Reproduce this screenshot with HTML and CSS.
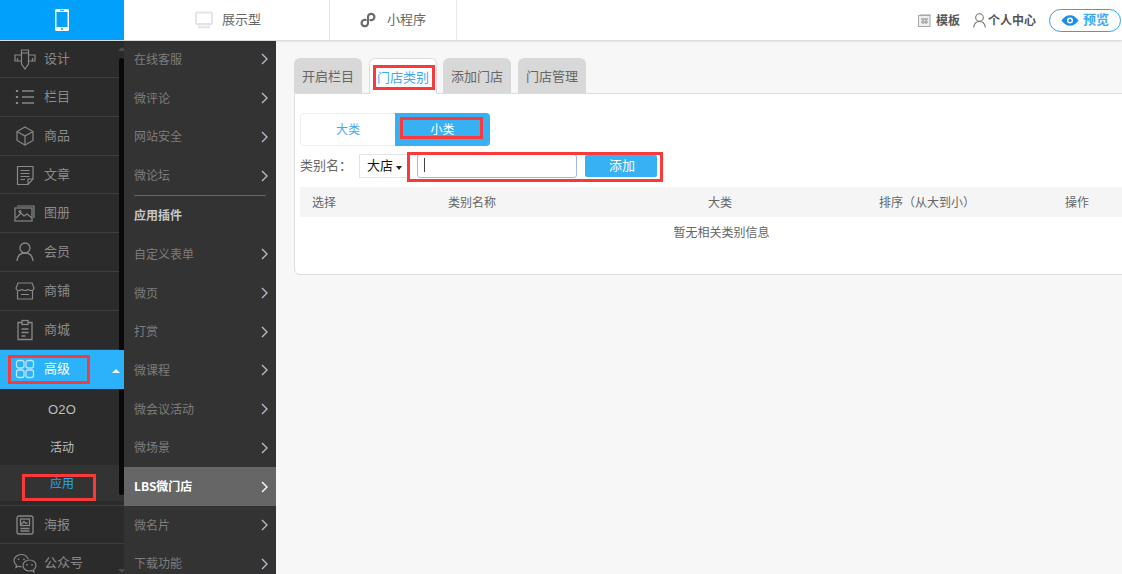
FILE: index.html
```html
<!DOCTYPE html>
<html lang="zh-CN">
<head>
<meta charset="utf-8">
<title>门店类别</title>
<link rel="stylesheet" href="styles.css">
</head>
<body>
<header class="topbar">
  <div class="logo">
    <svg width="14" height="22" viewBox="0 0 14 22"><rect width="14" height="22" rx="1.5" fill="#fff"/><rect x="1.5" y="3" width="11" height="15" fill="#00a0fb"/><rect x="5" y="0.9" width="4" height="0.9" fill="#00a0fb"/><circle cx="7" cy="20" r="1" fill="#00a0fb"/></svg>
  </div>
  <nav class="modes">
    <div class="mode mode-show">
      <svg width="18" height="18" viewBox="0 0 18 18" fill="none" stroke="#e4e4e4" stroke-width="2"><rect x="1" y="1.500" width="16" height="11.500" rx="1"/><path d="M4 14.500v2h10v-2" fill="#ececec" stroke-width="1.500"/></svg>
      <span>展示型</span>
    </div>
    <div class="mode mode-mini">
      <svg width="16" height="16" viewBox="0 0 16 16" fill="none" stroke="#6b6b6b" stroke-width="2.200" stroke-linecap="round"><path d="M5.500 7.900A3.200 3.200 0 1 0 8 11V5a3.200 3.200 0 1 1 2.500 3.100"/></svg>
      <span>小程序</span>
    </div>
  </nav>
  <div class="tools">
    <div class="tool tool-tpl">
      <svg width="13" height="13" viewBox="0 0 13 13" fill="none" stroke="#a8a8a8"><rect x="0.500" y="1.500" width="11.500" height="11" fill="#efefef"/><path d="M2 .5h10.500v10" stroke="#ccc"/><path d="M3 5h7M3 8h7M5 5v5M8 5v5" stroke-width="1.500"/></svg>
      <span>模板</span>
    </div>
    <div class="tool tool-user">
      <svg width="13" height="15" viewBox="0 0 13 15" fill="none" stroke="#777" stroke-width="1.100"><circle cx="6.500" cy="4.500" r="3.800"/><path d="M.7 14.500c.4-3.800 2.500-6 5.800-6s5.400 2.200 5.800 6"/></svg>
      <span>个人中心</span>
    </div>
    <div class="preview">
      <svg width="18" height="11" viewBox="0 0 17 11"><path d="M0 5.500C2.500 2 5.300.3 8.500.3S14.500 2 17 5.500c-2.500 3.500-5.300 5.200-8.500 5.200S2.500 9 0 5.500z" fill="#1a8fe8"/><circle cx="8.500" cy="5.500" r="3" fill="#fff"/><circle cx="8.500" cy="5.500" r="1.600" fill="#1a8fe8"/></svg>
      <span>预览</span>
    </div>
  </div>
</header>

<div class="body">
  <aside class="side">
    <ul class="menu">
      <li class="item"><svg class="ico" width="22" height="22" viewBox="0 0 22 22" fill="none" stroke="#888" stroke-width="1.200"><path d="M1 7h20v6H1z"/><path d="M7.500 2h7v14l-3.500 5-3.500-5z" fill="#2b2b2b"/><path d="M7.500 5h7M3.500 10v3M18.500 10v3"/></svg><span>设计</span></li>
      <li class="item"><svg class="ico" width="22" height="22" viewBox="0 0 22 22" fill="none" stroke="#888" stroke-width="1.400"><path d="M8 5h12M8 11h12M8 17h12"/><path d="M3 4v2M3 10v2M3 16v2" stroke-width="2.200"/></svg><span>栏目</span></li>
      <li class="item"><svg class="ico" width="22" height="22" viewBox="0 0 22 22" fill="none" stroke="#888" stroke-width="1.200"><path d="M11 2l8 4.500v9L11 20l-8-4.500v-9z"/><path d="M3 6.500l8 4.500 8-4.500M11 11v9"/></svg><span>商品</span></li>
      <li class="item"><svg class="ico" width="22" height="22" viewBox="0 0 22 22" fill="none" stroke="#888" stroke-width="1.200"><path d="M19 15V2.500H3.500v18H14z"/><path d="M19 15h-5v5.500M6.500 6.500h9M6.500 9.500h9M6.500 12.500h9M6.500 15.500h4.500"/></svg><span>文章</span></li>
      <li class="item"><svg class="ico" width="22" height="22" viewBox="0 0 22 22" fill="none" stroke="#888" stroke-width="1.200"><path d="M3 4h17v12"/><rect x="1" y="6" width="17" height="13"/><path d="M2 16l5-5 3 3 3-2 5 4"/><circle cx="6" cy="9.500" r="1"/></svg><span>图册</span></li>
      <li class="item"><svg class="ico" width="22" height="22" viewBox="0 0 22 22" fill="none" stroke="#888" stroke-width="1.300"><circle cx="11" cy="7" r="5"/><path d="M3 20c.5-5 3.500-8 8-8s7.500 3 8 8"/></svg><span>会员</span></li>
      <li class="item"><svg class="ico" width="22" height="22" viewBox="0 0 22 22" fill="none" stroke="#888" stroke-width="1.200"><path d="M4 3h14l2 5c0 1.500-1.500 2.500-3 2.500S14 9.500 14 9c0 .5-1.500 1.500-3 1.500S8 9.500 8 9c0 .5-1.500 1.500-3 1.500S2 9.500 2 8z"/><path d="M3.500 10.500V19h15v-8.500M7 14.500h8"/></svg><span>商铺</span></li>
      <li class="item"><svg class="ico" width="22" height="22" viewBox="0 0 22 22" fill="none" stroke="#888" stroke-width="1.300"><path d="M8 3.500H4v17h14v-17h-4"/><rect x="8" y="1.500" width="6" height="4"/><path d="M7.500 10h7M7.500 13.500h7M7.500 17h4"/></svg><span>商城</span></li>
      <li class="item item-active">
        <svg class="ico" width="22" height="22" viewBox="0 0 22 22" fill="none" stroke="#bfe6ff" stroke-width="1.300"><rect x="2.500" y="2.500" width="7.500" height="7.500" rx="2"/><rect x="12" y="2.500" width="7.500" height="7.500" rx="2"/><rect x="2.500" y="12" width="7.500" height="7.500" rx="2"/><rect x="12" y="12" width="7.500" height="7.500" rx="2"/></svg>
        <span>高级</span><i class="caret"></i><b class="mark mark-adv"></b>
      </li>
      <li class="sub">
        <div class="sub-item sub-o2o">O2O</div>
        <div class="sub-item">活动</div>
        <div class="sub-item sub-on"><span>应用</span><b class="mark mark-app"></b></div>
      </li>
      <li class="item"><svg class="ico" width="22" height="22" viewBox="0 0 22 22" fill="none" stroke="#888" stroke-width="1.300"><rect x="3" y="2" width="16" height="18" rx="2"/><rect x="6.500" y="5" width="9" height="6.500"/><path d="M6.500 14.500h9M6.500 17h9M7 10.500l3-3 2 2 1.500-1"/></svg><span>海报</span></li>
      <li class="item"><svg class="ico ico-wx" width="24" height="22" viewBox="0 0 24 22" fill="none" stroke="#888" stroke-width="1.200"><path d="M15 7C14 4 11.500 2.500 8.500 2.500 4.500 2.500 1 5 1 8.500c0 2 1 3.500 2.500 4.700L3 15.500l2.500-1.200c1 .3 2 .5 3 .5"/><path d="M23 13.500c0-3.200-3-5.500-6.500-5.500S10 10.300 10 13.500 13 19 16.500 19c.8 0 1.500-.1 2.200-.3l2.300 1.200-.5-2.200c1.500-1 2.500-2.500 2.500-4.200z"/><path d="M5.500 6.500v1.500M11 6.500v1.500M14 12v1.500M19 12v1.500" stroke-width="1.500"/></svg><span>公众号</span></li>
    </ul>
    <i class="scroll-up"></i>
    <i class="scroll-bar"></i>
    <i class="scroll-down"></i>
  </aside>

  <aside class="apps">
    <div class="app">在线客服<svg class="chev" width="7" height="12" viewBox="0 0 7 12"><path d="M1 1l5 5-5 5"/></svg></div>
    <div class="app">微评论<svg class="chev" width="7" height="12" viewBox="0 0 7 12"><path d="M1 1l5 5-5 5"/></svg></div>
    <div class="app">网站安全<svg class="chev" width="7" height="12" viewBox="0 0 7 12"><path d="M1 1l5 5-5 5"/></svg></div>
    <div class="app app-last">微论坛<svg class="chev" width="7" height="12" viewBox="0 0 7 12"><path d="M1 1l5 5-5 5"/></svg></div>
    <div class="app-title">应用插件</div>
    <div class="app">自定义表单<svg class="chev" width="7" height="12" viewBox="0 0 7 12"><path d="M1 1l5 5-5 5"/></svg></div>
    <div class="app">微页<svg class="chev" width="7" height="12" viewBox="0 0 7 12"><path d="M1 1l5 5-5 5"/></svg></div>
    <div class="app">打赏<svg class="chev" width="7" height="12" viewBox="0 0 7 12"><path d="M1 1l5 5-5 5"/></svg></div>
    <div class="app">微课程<svg class="chev" width="7" height="12" viewBox="0 0 7 12"><path d="M1 1l5 5-5 5"/></svg></div>
    <div class="app">微会议活动<svg class="chev" width="7" height="12" viewBox="0 0 7 12"><path d="M1 1l5 5-5 5"/></svg></div>
    <div class="app">微场景<svg class="chev" width="7" height="12" viewBox="0 0 7 12"><path d="M1 1l5 5-5 5"/></svg></div>
    <div class="app app-on">LBS微门店<svg class="chev" width="7" height="12" viewBox="0 0 7 12"><path d="M1 1l5 5-5 5"/></svg></div>
    <div class="app">微名片<svg class="chev" width="7" height="12" viewBox="0 0 7 12"><path d="M1 1l5 5-5 5"/></svg></div>
    <div class="app">下载功能<svg class="chev" width="7" height="12" viewBox="0 0 7 12"><path d="M1 1l5 5-5 5"/></svg></div>
  </aside>

  <main class="main">
    <div class="tabs">
      <div class="tab">开启栏目</div>
      <div class="tab tab-on">门店类别<b class="mark mark-tab"></b></div>
      <div class="tab">添加门店</div>
      <div class="tab">门店管理</div>
    </div>
    <section class="panel">
      <div class="seg">
        <div class="seg-btn">大类</div>
        <div class="seg-btn seg-on">小类<b class="mark mark-seg"></b></div>
      </div>
      <div class="form">
        <label class="form-label">类别名：</label>
        <div class="select">大店<i class="select-arrow"></i></div>
        <div class="form-group">
          <div class="input"><i class="cursor"></i></div>
          <div class="btn">添加</div>
          <b class="mark mark-form"></b>
        </div>
      </div>
      <div class="thead">
        <span>选择</span>
        <span>类别名称</span>
        <span>大类</span>
        <span>排序（从大到小）</span>
        <span>操作</span>
      </div>
      <div class="empty">暂无相关类别信息</div>
    </section>
  </main>
</div>
</body>
</html>
```
FILE: styles.css
```css
* { box-sizing: border-box; }
html, body { margin: 0; padding: 0; height: 100%; overflow: hidden; }
body {
  width: 1122px;
  height: 574px;
  display: flex;
  flex-direction: column;
  font-family: "Noto Sans CJK SC", "Liberation Sans", sans-serif;
  font-size: 12px;
  color: #666;
  background: #f7f7f7;
}
ul { list-style: none; margin: 0; padding: 0; }
i, b { display: block; font-style: normal; }

/* annotation boxes */
.mark { position: absolute; border: 3px solid #f93a3a; pointer-events: none; }
.mark-adv { left: 8px; top: 5px; width: 82px; height: 29px; }
.mark-app { left: 22px; top: 9px; width: 74px; height: 27px; }
.mark-tab { left: 3px; top: 6px; width: 62px; height: 25px; }
.mark-seg { left: 5px; top: 4px; width: 83px; height: 22px; }
.mark-form { left: -10px; top: -2px; width: 256px; height: 30px; }

/* top bar */
.topbar {
  height: 41px;
  flex: none;
  display: flex;
  background: #fff;
  border-bottom: 1px solid #ddd;
  box-shadow: 0 1px 2px rgba(0,0,0,.08);
  position: relative;
  z-index: 2;
}
.logo {
  width: 124px;
  height: 40px;
  background: #00a0fb;
  display: flex;
  align-items: center;
  justify-content: center;
}
.modes { display: flex; height: 40px; }
.mode {
  display: flex;
  align-items: center;
  font-size: 13px;
  color: #666;
  border-right: 1px solid #e8e8e8;
}
.mode span { padding-bottom: 3px; }
.mode-show { width: 206px; padding-left: 71px; gap: 9px; }
.mode-mini { width: 127px; padding-left: 30px; gap: 11px; }
.tools { margin-left: auto; display: flex; align-items: center; padding-right: 1px; }
.tool { display: flex; align-items: center; font-weight: 700; color: #555; }
.tool span { padding-bottom: 2px; }
.tool-tpl { gap: 6px; margin-right: 12px; margin-left: 1px; }
.tool-user { gap: 2px; margin-right: 13px; margin-left: 1px; }
.tool-tpl { gap: 5px; }
.preview {
  width: 72px;
  height: 23px;
  border: 1px solid #2aa3f5;
  border-radius: 12px;
  display: flex;
  align-items: center;
  padding-left: 11px;
  gap: 4px;
  font-size: 13px;
  font-weight: 700;
  color: #3fa9f5;
  background: #fff;
}
.preview span { padding-bottom: 3px; }

/* layout */
.body { flex: 1; display: flex; min-height: 0; }

/* first column */
.side {
  width: 124px;
  flex: none;
  background: #2b2b2b;
  position: relative;
  overflow: hidden;
  margin-top: -1px;
}
.item {
  height: 38.83px;
  display: flex;
  align-items: center;
  padding-left: 14px;
  font-size: 13px;
  color: #8a8a8a;
  border-bottom: 1px solid #3f3f3f;
  position: relative;
}
.item:first-child { height: 38px; }
.item > span { margin-left: 8px; padding-bottom: 3px; }
.ico { flex: none; }
.ico-wx { margin-left: -1px; margin-right: -1px; }
.item-active {
  background: #2cb1fb;
  color: #fff;
  border-bottom: 0;
  z-index: 1;
}
.caret {
  position: absolute;
  right: 4px;
  top: 19px;
  width: 0;
  height: 0;
  border-left: 4px solid transparent;
  border-right: 4px solid transparent;
  border-bottom: 4px solid #fff;
}
.sub {
  background: #2b2b2b;
  padding: 3px 0 4px;
  border-bottom: 1px solid #3f3f3f;
}
.sub-item {
  height: 36.5px;
  display: flex;
  align-items: center;
  justify-content: center;
  font-size: 12px;
  color: #bdbdbd;
  position: relative;
}
.sub-o2o { font-family: "Liberation Sans", sans-serif; font-size: 13px; letter-spacing: .2px; }
.sub-on { background: #333; color: #2aa7f5; height: 36px; align-items: flex-start; padding-top: 9px; }
.scroll-bar {
  position: absolute;
  left: 119px;
  top: 18px;
  width: 5px;
  height: 437px;
  background: #0a0a0a;
  border-radius: 3px;
}
.scroll-up, .scroll-down {
  position: absolute;
  left: 118px;
  width: 0;
  height: 0;
  border-left: 4px solid transparent;
  border-right: 4px solid transparent;
}
.scroll-up { top: 7px; border-bottom: 4px solid #4c4c4c; }
.scroll-down { bottom: 1px; border-top: 4px solid #4c4c4c; }

/* second column */
.apps {
  width: 152px;
  flex: none;
  background: #333;
  padding: 0 8px 0 10px;
  margin-top: -1px;
  overflow: hidden;
}
.app {
  height: 38.7px;
  display: flex;
  align-items: center;
  justify-content: space-between;
  padding-bottom: 2px;
  color: #7d7d7d;
}
.chev { flex: none; margin-top: 2px; fill: none; stroke: #b4bccb; stroke-width: 1.4; }
.app-last { height: 39px; }
.app-title {
  height: 40px;
  border-top: 1px solid #666;
  margin-right: 2px;
  padding-bottom: 2px;
  display: flex;
  align-items: center;
  font-weight: 700;
  color: #c8c8c8;
}
.app-on {
  margin: 0 -8px 0 -10px;
  padding: 0 8px 2px 10px;
  background: #666;
  color: #fff;
  font-weight: 700;
}
.app-on .chev { stroke: #fff; }

/* content */
.main { flex: 1; min-width: 0; padding: 17px 0 0 18px; }
.tabs { display: flex; gap: 7px; height: 35px; position: relative; z-index: 1; }
.tab {
  width: 68px;
  height: 35px;
  background: #d8d8d8;
  border-radius: 6px 6px 0 0;
  display: flex;
  align-items: center;
  justify-content: center;
  font-size: 13px;
  color: #666;
  position: relative;
}
.tab-on {
  background: #fff;
  color: #3fa9f5;
  border: 1px solid #ddd;
  border-bottom: 0;
  height: 36px;
  margin-right: -1px;
}
.panel {
  width: 840px;
  height: 182px;
  background: #fff;
  border: 1px solid #ddd;
  border-radius: 0 0 6px 6px;
  padding: 19px 0 0 5px;
}
.seg {
  width: 190px;
  height: 33px;
  display: flex;
  border: 1px solid #eee;
  border-radius: 4px;
}
.seg-btn {
  width: 95px;
  padding-bottom: 2px;
  display: flex;
  align-items: center;
  justify-content: center;
  color: #3fa9f5;
  position: relative;
}
.seg-btn:first-child { width: 94px; }
.seg-on {
  margin: -1px -1px -1px 0;
  background: #38b0f4;
  color: #fff;
  border-radius: 0 4px 4px 0;
}
.form { display: flex; align-items: center; height: 24px; margin-top: 8px; }
.form-label { width: 59px; padding-bottom: 4px; font-family: "Noto Sans CJK TC", sans-serif; font-size: 13px; color: #666; }
.select {
  width: 50px;
  height: 24px;
  border: 1px solid #e4e4e4;
  background: #fff;
  display: flex;
  align-items: center;
  padding: 0 0 4px 7px;
  font-size: 13px;
  color: #111;
  position: relative;
}
.select-arrow {
  margin: 7px 0 0 3px;
  width: 0;
  height: 0;
  border-left: 3px solid transparent;
  border-right: 3px solid transparent;
  border-top: 4px solid #222;
}
.form-group { display: flex; align-items: center; gap: 8px; margin-left: 8px; position: relative; }
.input {
  width: 160px;
  height: 24px;
  border: 1px solid #9fb9ee;
  border-radius: 3px;
  background: #fff;
  padding: 3px 0 0 6px;
}
.cursor { width: 1px; height: 14px; background: #444; }
.btn {
  width: 72px;
  height: 22px;
  border-radius: 2px;
  background: #38b0f4;
  color: #fff;
  font-size: 13px;
  padding: 0 0 4px 2px;
  display: flex;
  align-items: center;
  justify-content: center;
}
.thead {
  display: grid;
  grid-template-columns: 136px 260px 171px 186px 1fr;
  align-items: center;
  height: 30px;
  margin-top: 9px;
  padding: 0 0 2px 12px;
  background: #f5f5f5;
  color: #666;
}
.empty {
  width: 843px;
  padding-top: 6px;
  line-height: 17px;
  text-align: center;
  color: #666;
}
```
